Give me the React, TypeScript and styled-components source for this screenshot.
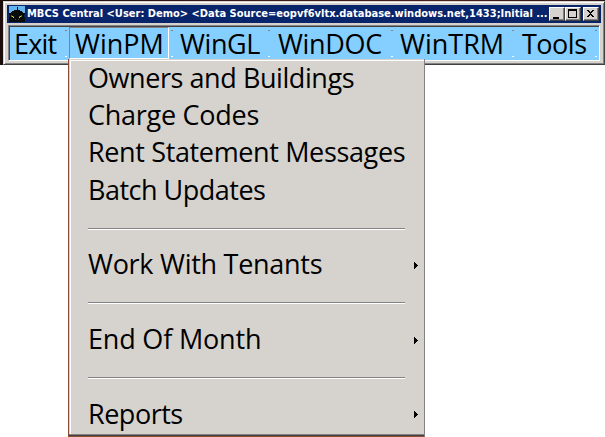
import React from "react";
import styled, { createGlobalStyle, css } from "styled-components";

const GlobalStyle = createGlobalStyle`
  * { box-sizing: border-box; }
  body { margin: 0; background: #fff; overflow: hidden; }
`;

const Page = styled.main`
  position: relative;
  width: 605px;
  height: 437px;
  background: #fff;
  overflow: hidden;
  font-family: "Open Sans", "Noto Sans", sans-serif;
  color: #000;
`;

const Desktop = styled.div`
  height: 65px;
  padding: 1px 0 0 3px;
  background: linear-gradient(90deg, #1c0d0c, #3a1a18 40%, #4a211b 75%, #2a1210);
`;

const WindowFrame = styled.section`
  height: 64px;
  padding: 2px 3px 0 3px;
  background: #d6d3ce;
  border: 1px solid #d6d3ce;
  border-right-color: #424142;
  border-bottom-color: #424142;
  box-shadow: inset 1px 1px #fff, inset -1px -1px #848284;
`;

const TitleBar = styled.header`
  display: flex;
  align-items: center;
  height: 18px;
  margin-top: 1px;
  padding: 0 2px 0 2px;
  background: #08246b;
`;

const Title = styled.h1`
  flex: 1;
  margin: 0 0 0 2px;
  color: #fff;
  font: bold 11px/16px "DejaVu Sans Condensed", "DejaVu Sans", sans-serif;
  font-stretch: condensed;
  white-space: nowrap;
`;

const Controls = styled.div`
  display: flex;
`;

const ControlButton = styled.button<{ $gap?: boolean }>`
  display: flex;
  width: 16px;
  height: 14px;
  margin: 0 0 0 ${(p) => (p.$gap ? 2 : 0)}px;
  padding: 0;
  background: #d6d3ce;
  border: 1px solid;
  border-color: #fff #424142 #424142 #fff;
  box-shadow: inset -1px -1px #848284;
`;

const MenuBar = styled.nav`
  display: flex;
  height: 36px;
  margin: 2px 1px 0;
  background: #84cfff;
  border: 1px solid;
  border-color: #848284 #fff #fff #848284;
  box-shadow: inset 1px 1px #424142;
`;

const MenuItem = styled.div<{ $width: number }>`
  display: flex;
  flex: none;
  justify-content: space-between;
  width: ${(p) => p.$width}px;
  padding: 1px 0 0 2px;
`;

const MenuLabel = styled.span<{ $inset: number; $track: number; $open?: boolean }>`
  width: ${(p) => (p.$open ? "100px" : "auto")};
  height: 32px;
  padding-left: ${(p) => p.$inset}px;
  border: 1px solid transparent;
  ${(p) => p.$open && css`border-color: #848284 #fff #fff #848284;`}
  font-size: 27px;
  line-height: 31px;
  letter-spacing: ${(p) => p.$track}px;
  white-space: nowrap;
`;

const Grip = styled.i`
  width: 2px;
  height: 27px;
  margin-top: 3px;
  border-top: 1px solid #848284;
  border-bottom: 1px solid #fff;
`;

const Popup = styled.div`
  position: absolute;
  left: 68px;
  top: 59px;
  width: 357px;
  height: 378px;
  padding: 1.6px 0 0 2px;
  background: #d6d3ce;
  border-left: 1px solid #874b38;
  border-right: 1px solid #848284;
  border-bottom: 1px solid #8a5030;
  box-shadow: inset 0 -1px #424142, inset 0 -2px #848284, inset 1px 1px #d6d3ce, inset 2px 2px #fff;
`;

const PopupRow = styled.div<{ $track: number }>`
  display: flex;
  align-items: center;
  justify-content: space-between;
  height: 37.35px;
  padding: 0 6px 3px 17px;
  font-size: 27px;
  line-height: 36px;
  letter-spacing: ${(p) => p.$track}px;
  white-space: nowrap;
`;

const SeparatorRow = styled.div`
  display: flex;
  align-items: center;
  height: 37.35px;
  padding: 0 19px 0 17px;
`;

const Separator = styled.hr`
  flex: 1;
  height: 2px;
  margin: 0;
  border: 0;
  border-top: 1px solid #848284;
  border-bottom: 1px solid #fff;
`;

const Arrow = styled.svg`
  flex: none;
  margin-top: 2px;
`;

const AppIcon = () => (
  <svg width="16" height="16" viewBox="0 0 16 16" shapeRendering="crispEdges">
    <path fill="#63b5ef" d="M0 0h16v9H0z" />
    <path fill="#356584" d="M0 7h16v2H0z" />
    <path fill="#080b08" d="M8 1h1v3h2v1h2v1h1v1h2v2h-1v2h1v5H0v-5h1V9H0V7h2V6h1V5h2V4h3z" />
    <path fill="#636531" d="M2 9h1v1h2v2H4v-1H2zM13 9h-1v1h-2v2h1v-1h2z" />
    <path fill="#cecf52" d="M3 10h1v1h1v1H4v-1H3zM12 10h-1v1h-1v1h1v-1h1z" />
    <path fill="#424521" d="M6 13h1v1H6zM9 13h1v1H9z" />
  </svg>
);

const glyphs = {
  minimize: <path d="M3 9h6v2H3z" />,
  maximize: <path fillRule="evenodd" d="M2 1h9v9H2zM3 3v6h7V3z" />,
  close: <path d="M3 2h2v1h1v1h1V3h1V2h2v1H9v1H8v1H7v1h1v1h1v1h1v1H8V8H7V7H6v1H5v1H3V8h1V7h1V6h1V5H5V4H4V3H3z" />,
};

const WindowControl = ({ name, gap }: { name: keyof typeof glyphs; gap?: boolean }) => (
  <ControlButton aria-label={name} $gap={gap}>
    <svg width="14" height="12" viewBox="0 0 14 12" shapeRendering="crispEdges">{glyphs[name]}</svg>
  </ControlButton>
);

const menus = [
  { label: "Exit", width: 58, inset: 2, track: -0.8 },
  { label: "WinPM", width: 106, inset: 5, track: 0, open: true },
  { label: "WinGL", width: 97, inset: 4, track: -0.4 },
  { label: "WinDOC", width: 123, inset: 5, track: -0.35 },
  { label: "WinTRM", width: 121, inset: 4, track: 0 },
  { label: "Tools", width: 83, inset: 5, track: -0.5 },
];

type Entry = { label: string; track: number; submenu?: boolean } | null;

const entries: Entry[] = [
  { label: "Owners and Buildings", track: -0.43 },
  { label: "Charge Codes", track: -0.26 },
  { label: "Rent Statement Messages", track: -0.36 },
  { label: "Batch Updates", track: -0.5 },
  null,
  { label: "Work With Tenants", track: -0.28, submenu: true },
  null,
  { label: "End Of Month", track: -0.18, submenu: true },
  null,
  { label: "Reports", track: -0.48, submenu: true },
];

export default function App() {
  return (
    <Page>
      <GlobalStyle />
      <Desktop>
        <WindowFrame>
          <TitleBar>
            <AppIcon />
            <Title>{"MBCS Central <User: Demo> <Data Source=eopvf6vltx.database.windows.net,1433;Initial ..."}</Title>
            <Controls>
              <WindowControl name="minimize" />
              <WindowControl name="maximize" />
              <WindowControl name="close" gap />
            </Controls>
          </TitleBar>
          <MenuBar>
            {menus.map((m) => (
              <MenuItem key={m.label} $width={m.width}>
                <MenuLabel $inset={m.inset} $track={m.track} $open={m.open}>{m.label}</MenuLabel>
                <Grip />
              </MenuItem>
            ))}
          </MenuBar>
        </WindowFrame>
      </Desktop>
      <Popup>
        {entries.map((entry, i) =>
          entry ? (
            <PopupRow key={entry.label} $track={entry.track}>
              {entry.label}
              {entry.submenu && (
                <Arrow width="4" height="7" viewBox="0 0 4 7" shapeRendering="crispEdges">
                  <path d="M0 0h1v1h1v1h1v1h1v1H3v1H2v1H1v1H0z" />
                </Arrow>
              )}
            </PopupRow>
          ) : (
            <SeparatorRow key={i}>
              <Separator />
            </SeparatorRow>
          )
        )}
      </Popup>
    </Page>
  );
}
